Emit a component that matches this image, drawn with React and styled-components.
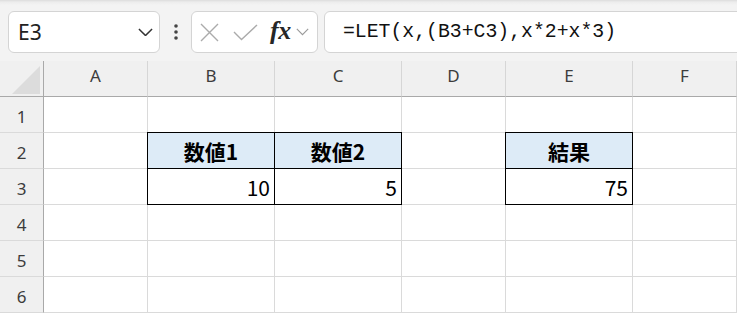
import React from "react"
import styled, { createGlobalStyle } from "styled-components"

const GlobalStyle = createGlobalStyle`
  html, body {
    margin: 0;
    padding: 0;
    background: #ffffff;
    overflow: hidden;
  }
`

const Page = styled.div`
  width: 737px;
  height: 314px;
  overflow: hidden;
  font-family: "Noto Sans", "Open Sans", sans-serif;
`

const Toolbar = styled.div`
  display: flex;
  align-items: flex-start;
  height: 61px;
  box-sizing: border-box;
  padding: 11px 0 0 8px;
  background: linear-gradient(#dcdcdc 0px, #ececec 2px, #f3f3f3 5px, #f3f3f3 100%);
`

const Box = styled.div`
  display: flex;
  align-items: center;
  height: 42px;
  box-sizing: border-box;
  background: #ffffff;
  border: 1px solid #d4d4d4;
  border-radius: 6px;
`

const NameBox = styled(Box)`
  width: 152px;
  padding: 0 6px 0 9px;
  justify-content: space-between;
  font-size: 21px;
  color: #222;
`

const Dots = styled.div`
  width: 31px;
  height: 42px;
  display: flex;
  align-items: center;
  justify-content: center;
`

const FxBox = styled(Box)`
  width: 127px;
  padding: 0 0 0 8px;
`

const FxLabel = styled.span`
  font-family: "Liberation Serif", "DejaVu Serif", serif;
  font-style: italic;
  font-weight: bold;
  font-size: 26px;
  color: #262626;
  margin: -3px 5px 0 12px;
  letter-spacing: -0.5px;
`

const FormulaBox = styled(Box)`
  flex: 1;
  margin-left: 6px;
  margin-right: -10px;
  padding-left: 18px;
  font-family: "Liberation Mono", "DejaVu Sans Mono", monospace;
  font-size: 19.8px;
  color: #111;
`

const Grid = styled.div`
  display: grid;
  grid-template-columns: 44px 104px 127px 127px 104px 127px 1fr;
  grid-auto-rows: 36px;
  background: #ffffff;
`

const Cell = styled.div`
  position: relative;
  box-sizing: border-box;
  border-right: 1px solid #dadada;
  border-bottom: 1px solid #dadada;
  background: ${(p) => (p.$fill ? "#ddebf7" : "#ffffff")};
  display: flex;
  align-items: center;
  justify-content: ${(p) => (p.$align === "right" ? "flex-end" : "center")};
  padding: 1px 4px 0 4px;
  font-family: "Noto Sans CJK JP", "Noto Sans", sans-serif;
  font-size: 21px;
  font-weight: ${(p) => (p.$bold ? 700 : 400)};
  color: #000;

  ${(p) =>
    p.$boxed &&
    `
    &::after {
      content: "";
      position: absolute;
      top: -1px;
      left: -1px;
      right: -1px;
      bottom: -1px;
      border: 1px solid #000;
      pointer-events: none;
    }
  `}
`

const Header = styled.div`
  box-sizing: border-box;
  background: #f0f0f0;
  border-right: 1px solid ${(p) => (p.$corner ? "#a9a9a9" : "#d6d6d6")};
  border-bottom: 1px solid #a9a9a9;
  display: flex;
  align-items: center;
  justify-content: center;
  padding-bottom: 7px;
  font-size: 17px;
  color: #3c3c3c;
  position: relative;
`

const RowHead = styled.div`
  box-sizing: border-box;
  background: #f0f0f0;
  border-right: 1px solid #a9a9a9;
  border-bottom: 1px solid #dadada;
  display: flex;
  align-items: center;
  justify-content: center;
  padding-top: 4px;
  font-size: 17px;
  color: #3c3c3c;
`

const Chevron = ({ size = 15, color = "#333", width = 1.6 }) => (
  <svg width={size} height={size / 2 + 1} viewBox="0 0 16 9">
    <path d="M1 1 L8 8 L15 1" fill="none" stroke={color} strokeWidth={width} />
  </svg>
)

const columns = ["A", "B", "C", "D", "E", "F"]

const data = {
  "2-1": { text: "数値1", bold: true, fill: true, boxed: true },
  "2-2": { text: "数値2", bold: true, fill: true, boxed: true },
  "2-4": { text: "結果", bold: true, fill: true, boxed: true },
  "3-1": { text: "10", align: "right", boxed: true },
  "3-2": { text: "5", align: "right", boxed: true },
  "3-4": { text: "75", align: "right", boxed: true },
}

export default function App() {
  const rows = [1, 2, 3, 4, 5, 6]
  return (
    <Page>
      <GlobalStyle />
      <Toolbar>
        <NameBox>
          <span>E3</span>
          <Chevron />
        </NameBox>
        <Dots>
          <svg width="4" height="16" viewBox="0 0 4 16">
            <circle cx="2" cy="2" r="1.8" fill="#444" />
            <circle cx="2" cy="8" r="1.8" fill="#444" />
            <circle cx="2" cy="14" r="1.8" fill="#444" />
          </svg>
        </Dots>
        <FxBox>
          <svg width="19" height="19" viewBox="0 0 19 19">
            <path d="M1 1 L18 18 M18 1 L1 18" stroke="#ababab" strokeWidth="1.4" />
          </svg>
          <svg width="25" height="17" viewBox="0 0 25 17" style={{ marginLeft: 14 }}>
            <path d="M1 8 L8.5 15.5 L24 1" fill="none" stroke="#ababab" strokeWidth="1.4" />
          </svg>
          <FxLabel>fx</FxLabel>
          <Chevron size={13} color="#9a9a9a" width={1.4} />
        </FxBox>
        <FormulaBox>=LET(x,(B3+C3),x*2+x*3)</FormulaBox>
      </Toolbar>
      <Grid>
        <Header $corner>
          <svg width="28" height="28" viewBox="0 0 28 28" style={{ position: "absolute", right: 3, bottom: 2 }}>
            <path d="M28 0 L28 28 L0 28 Z" fill="#dcdcdc" />
          </svg>
        </Header>
        {columns.map((c) => (
          <Header key={c}>{c}</Header>
        ))}
        {rows.map((r) => (
          <React.Fragment key={r}>
            <RowHead>{r}</RowHead>
            {columns.map((c, ci) => {
              const d = data[`${r}-${ci}`]
              return (
                <Cell
                  key={c}
                  $bold={d?.bold}
                  $fill={d?.fill}
                  $boxed={d?.boxed}
                  $align={d?.align}
                >
                  {d?.text}
                </Cell>
              )
            })}
          </React.Fragment>
        ))}
      </Grid>
    </Page>
  )
}
